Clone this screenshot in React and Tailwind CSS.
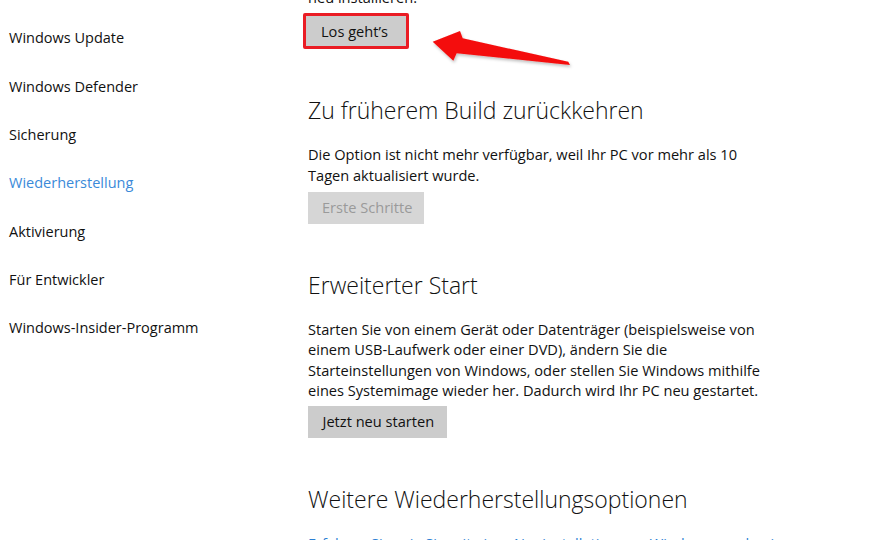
const sidebar = [
  'Windows Update',
  'Windows Defender',
  'Sicherung',
  'Wiederherstellung',
  'Aktivierung',
  'Für Entwickler',
  'Windows-Insider-Programm',
];

function Heading({ children }) {
  return (
    <h2 className="mt-[46px] text-[23px] leading-[30px] font-light text-[#111] whitespace-nowrap">
      {children}
    </h2>
  );
}

function Body({ lines }) {
  return (
    <p className="mt-[19px] text-[14.6px] leading-[20.33px] text-[#111] whitespace-nowrap">
      {lines.map((l, i) => (
        <span key={i} className="block">{l}</span>
      ))}
    </p>
  );
}

function Arrow() {
  return (
    <svg className="absolute inset-0 pointer-events-none" width="880" height="540" viewBox="0 0 880 540">
      <defs>
        <filter id="sh" x="-10%" y="-30%" width="120%" height="160%">
          <feDropShadow dx="1" dy="2" stdDeviation="1.5" floodColor="#000" floodOpacity="0.25" />
        </filter>
      </defs>
      <polygon
        points="432.7,41.7 460,31 462.7,38.3 568.3,61.7 570,65 456.7,53.3 453.3,60.7"
        fill="#f40c0c"
        filter="url(#sh)"
      />
    </svg>
  );
}

export default function App() {
  return (
    <div
      className="relative w-[880px] h-[540px] overflow-hidden bg-white flex"
      style={{ fontFamily: '"Open Sans", "Noto Sans", sans-serif' }}
    >
      {/* Navigation */}
      <nav className="w-[308px] shrink-0 pt-[14px] pl-[9px]">
        {sidebar.map(item => (
          <div
            key={item}
            className={`h-[48.33px] flex items-center text-[14.5px] ${
              item === 'Wiederherstellung' ? 'text-[#3b8ad9]' : 'text-[#111]'
            }`}
          >
            {item}
          </div>
        ))}
      </nav>

      {/* Content */}
      <main className="flex-1 -mt-[12.7px]">
        <p className="text-[14.6px] leading-[20.33px] text-[#111]">neu installieren.</p>

        <div className="mt-[5.7px] -ml-[5px] w-[106px] h-[36px] border-[3px] border-[#ea1c24] rounded-[2px] flex">
          <button className="flex-1 bg-[#cccccc] text-[14.6px] text-[#111] text-left pl-[15px] pt-px">
            Los geht’s
          </button>
        </div>

        <Heading>Zu früherem Build zurückkehren</Heading>
        <Body
          lines={[
            'Die Option ist nicht mehr verfügbar, weil Ihr PC vor mehr als 10',
            'Tagen aktualisiert wurde.',
          ]}
        />
        <button className="mt-[7px] h-[32px] w-[116px] bg-[#d6d6d6] text-[14.6px] text-[#9a9a9a] text-left pl-[14px]">
          Erste Schritte
        </button>

        <Heading>Erweiterter Start</Heading>
        <Body
          lines={[
            'Starten Sie von einem Gerät oder Datenträger (beispielsweise von',
            'einem USB-Laufwerk oder einer DVD), ändern Sie die',
            'Starteinstellungen von Windows, oder stellen Sie Windows mithilfe',
            'eines Systemimage wieder her. Dadurch wird Ihr PC neu gestartet.',
          ]}
        />
        <button className="mt-[6px] h-[32px] w-[139px] bg-[#cccccc] text-[14.6px] text-[#111] text-left pl-[14.5px]">
          Jetzt neu starten
        </button>

        <Heading>Weitere Wiederherstellungsoptionen</Heading>
        <p className="mt-[19px] text-[14.6px] leading-[20.33px] text-[#2c7fd4] whitespace-nowrap">
          Erfahren Sie, wie Sie mit einer Neuinstallation von Windows neu beginnen
        </p>
      </main>

      <Arrow />
    </div>
  );
}
